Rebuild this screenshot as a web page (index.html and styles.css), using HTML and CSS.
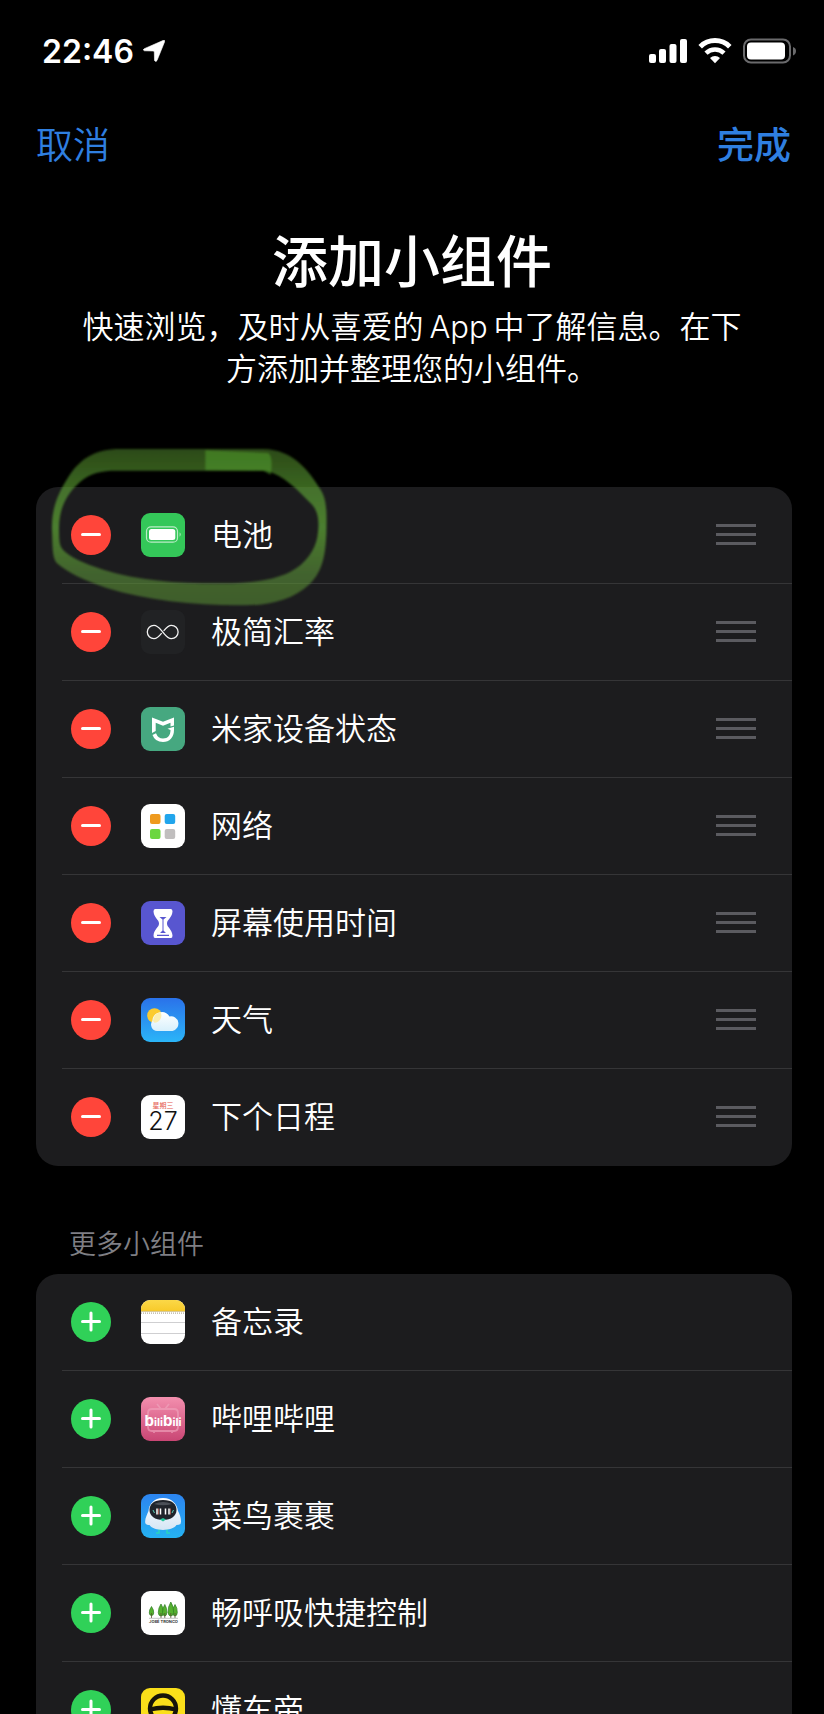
FILE: index.html
```html
<!DOCTYPE html>
<html lang="zh-CN">
<head>
    <meta charset="UTF-8">
    <meta name="viewport" content="width=device-width, initial-scale=1.0">
    <title>添加小组件</title>
    <link rel="stylesheet" href="styles.css">
</head>
<body>
    <div class="screen">
        <div class="status-bar">
            <div class="status-left">
                <span class="time">22:46</span>
                <svg width="22" height="22" viewBox="0 0 22 22"><path d="M20.5 .3 Q22 0 21.7 1.5 L14 20.5 Q13 22.5 11.500 20.5 L11.3 12 Q11.200 11 10.2 11 L1.5 10.800 Q-.8 10 1.3 8.700 Z" fill="#fff" stroke="#fff" stroke-width=".6"/></svg>
            </div>
            <div class="status-right">
                <svg width="38" height="26" viewBox="0 0 38 26" fill="#fff">
                    <rect x="0" y="16" width="7" height="9" rx="2"/>
                    <rect x="10" y="11" width="7" height="14" rx="2"/>
                    <rect x="20.500" y="6" width="7" height="19" rx="2"/>
                    <rect x="31" y="1" width="7" height="24" rx="2"/>
                </svg>
                <svg width="34" height="26" viewBox="0 0 34 26" fill="none" stroke="#fff" stroke-width="5">
                    <path d="M2.200 8.700 A21 21 0 0 1 31.800 8.700"/>
                    <path d="M8 15.200 A13 13 0 0 1 26 15.200" stroke-width="4.500"/>
                    <path d="M17 25.200 L12 20 A7.500 7.500 0 0 1 22 20 Z" fill="#fff" stroke="none"/>
                </svg>
                <svg width="54" height="26" viewBox="0 0 54 26">
                    <rect x="1" y="1.500" width="46" height="23" rx="7" fill="none" stroke="#6a6a6c" stroke-width="2"/>
                    <rect x="4" y="4.500" width="38" height="17" rx="4" fill="#fff"/>
                    <path d="M50 9 Q53 10 53 13 T50 17.500 Z" fill="#6a6a6c"/>
                </svg>
            </div>
        </div>

        <nav class="nav-bar">
            <button type="button" class="nav-btn">取消</button>
            <button type="button" class="nav-btn nav-done">完成</button>
        </nav>

        <header class="intro">
            <h1>添加小组件</h1>
            <p>快速浏览，及时从喜爱的<span class="latin">App</span>中了解信息。在下方添加并整理您的小组件。</p>
        </header>

        <main>
            <section class="card">
                <ul class="widget-list">
                    <li class="row">
                        <button type="button" class="toggle remove" aria-label="移除电池"></button>
                        <svg class="app-icon" viewBox="0 0 44 44">
                            <rect width="44" height="44" fill="#34c759"/>
                            <rect x="5.500" y="13.800" width="31" height="15.400" rx="4.500" fill="none" stroke="#b9ecc6" stroke-width="1.200"/>
                            <rect x="8" y="16" width="26.300" height="11" rx="2.500" fill="#fff"/>
                            <path d="M38.600 19.300 Q40.800 21.500 38.600 23.700 Z" fill="#b9ecc6"/>
                        </svg>
                        <span class="name">电池</span>
                        <button type="button" class="handle" aria-label="移动电池"></button>
                    </li>
                    <li class="row">
                        <button type="button" class="toggle remove" aria-label="移除极简汇率"></button>
                        <svg class="app-icon" viewBox="0 0 44 44">
                            <rect width="44" height="44" fill="#212224"/>
                            <path d="M20.700 23.200 C18.500 26 16.300 28.700 13 28.700 A6.700 6.700 0 0 1 13 15.300 C16.800 15.300 19 18.800 21.700 22 C24.400 25.200 26.600 28.700 30.400 28.700 A6.700 6.700 0 0 0 30.400 15.300 C27 15.300 25 18 22.700 20.800" fill="none" stroke="#f2f2f2" stroke-width="1.300"/>
                        </svg>
                        <span class="name">极简汇率</span>
                        <button type="button" class="handle" aria-label="移动极简汇率"></button>
                    </li>
                    <li class="row">
                        <button type="button" class="toggle remove" aria-label="移除米家设备状态"></button>
                        <svg class="app-icon" viewBox="0 0 44 44">
                            <rect width="44" height="44" fill="#46a880"/>
                            <path d="M11 10.500 L22 14.800 L33 10.500 V18.500 L29.500 19.500 V15.800 L22 18.800 L14.700 15.800 V24 L11 26 Z" fill="#fff"/>
                            <path d="M11.500 28 L15 26.200 Q17 31.500 22 31.500 C27 31.500 29.500 28 29.500 23 L26.500 21.800 L33 19.800 V23 C33 30.500 28.500 35 22 35 Q14 35 11.500 28 Z" fill="#fff"/>
                        </svg>
                        <span class="name">米家设备状态</span>
                        <button type="button" class="handle" aria-label="移动米家设备状态"></button>
                    </li>
                    <li class="row">
                        <button type="button" class="toggle remove" aria-label="移除网络"></button>
                        <svg class="app-icon" viewBox="0 0 44 44">
                            <rect width="44" height="44" fill="#fff"/>
                            <rect x="9" y="10" width="10.500" height="10" rx="2" fill="#ee9a1e"/>
                            <rect x="23.700" y="10" width="10.500" height="10" rx="2" fill="#21a5ec"/>
                            <rect x="9" y="25" width="10.500" height="10" rx="2" fill="#6bd63f"/>
                            <rect x="23.700" y="25" width="10.500" height="10" rx="2" fill="#c0bebe"/>
                        </svg>
                        <span class="name">网络</span>
                        <button type="button" class="handle" aria-label="移动网络"></button>
                    </li>
                    <li class="row">
                        <button type="button" class="toggle remove" aria-label="移除屏幕使用时间"></button>
                        <svg class="app-icon" viewBox="0 0 44 44">
                            <rect width="44" height="44" fill="#5856d0"/>
                            <path d="M14 8 H30 Q31.500 8 31.500 10.500 C31 17 26 18.500 26 22.500 C26 26.500 31 28 31.500 34.500 Q31.500 37 30 37 H14 Q12.500 37 12.500 34.500 C13 28 18 26.500 18 22.500 C18 18.500 13 17 12.500 10.500 Q12.500 8 14 8 Z" fill="#fff"/>
                            <path d="M18.500 16 H25.500 L22.500 18.500 V29.500 L25 32 H19 L21.500 29.500 V18.500 Z" fill="#5856d0"/>
                            <path d="M16 34.400 H28" stroke="#5856d0" stroke-width="1.200"/>
                        </svg>
                        <span class="name">屏幕使用时间</span>
                        <button type="button" class="handle" aria-label="移动屏幕使用时间"></button>
                    </li>
                    <li class="row">
                        <button type="button" class="toggle remove" aria-label="移除天气"></button>
                        <svg class="app-icon" viewBox="0 0 44 44">
                            <linearGradient id="sky" x2="0" y2="1"><stop stop-color="#2a72ea"/><stop offset="1" stop-color="#2bb5f8"/></linearGradient>
                            <linearGradient id="cloud" x2="0" y2="1"><stop stop-color="#fff"/><stop offset="1" stop-color="#d8f0fc"/></linearGradient>
                            <rect width="44" height="44" fill="url(#sky)"/>
                            <circle cx="13.500" cy="17.500" r="7.300" fill="#fbcb30"/>
                            <path d="M16 33 A6.300 6.300 0 0 1 11.300 23 A9.300 9.300 0 0 1 28.500 18.500 A7.300 7.300 0 1 1 31.500 33 Z" fill="url(#cloud)"/>
                            <path d="M13.500 24.800 A7.300 7.300 0 0 0 19.500 14 Q12.500 16 12 23 Z" fill="#fbeeb0"/>
                        </svg>
                        <span class="name">天气</span>
                        <button type="button" class="handle" aria-label="移动天气"></button>
                    </li>
                    <li class="row">
                        <button type="button" class="toggle remove" aria-label="移除下个日程"></button>
                        <svg class="app-icon" viewBox="0 0 44 44">
                            <rect width="44" height="44" fill="#fff"/>
                            <text x="22" y="13" class="cal-week">星期三</text>
                            <text x="22" y="35" class="cal-day">27</text>
                        </svg>
                        <span class="name">下个日程</span>
                        <button type="button" class="handle" aria-label="移动下个日程"></button>
                    </li>
                </ul>

                <!-- marker loop around the battery row -->
                <svg class="marker" viewBox="60 50 840 480">
                    <defs>
                        <linearGradient id="ink" x2="0" y2="1">
                            <stop stop-color="#5c9a30" stop-opacity=".48"/>
                            <stop offset=".25" stop-color="#5ea535" stop-opacity=".62"/>
                            <stop offset=".5" stop-color="#5ea535" stop-opacity=".72"/>
                            <stop offset=".8" stop-color="#5f9a38" stop-opacity=".56"/>
                            <stop offset="1" stop-color="#5f9a38" stop-opacity=".52"/>
                        </linearGradient>
                        <filter id="soft"><feGaussianBlur stdDeviation="3"/></filter>
                    </defs>
                    <g filter="url(#soft)">
                        <path fill="url(#ink)" fill-rule="evenodd" d="M66 300 C64 240 80 195 115 140 C150 85 195 56 270 56 L700 56 C790 58 835 120 870 175 C890 205 891 240 889 310 C886 370 880 420 840 460 C790 508 720 525 640 525 C500 526 350 510 230 473 C160 450 110 425 80 398 C66 380 68 345 66 300 Z
                            M87 300 C86 240 105 195 150 155 C180 128 215 121 260 121 L710 121 C760 135 800 175 845 222 C866 245 869 275 862 320 C856 355 830 400 780 425 C730 450 660 459 580 459 C450 460 330 452 220 418 C160 400 120 380 100 360 C86 345 88 325 87 300 Z"/>
                        <path d="M526 60 L715 68 Q730 80 722 133 L700 121 L526 120 Z" fill="#53a52e" opacity=".5"/>
                    </g>
                </svg>
            </section>

            <h2>更多小组件</h2>

            <section class="card">
                <ul class="widget-list">
                    <li class="row">
                        <button type="button" class="toggle add" aria-label="添加备忘录"></button>
                        <svg class="app-icon" viewBox="0 0 44 44">
                            <linearGradient id="pad" x2="0" y2="1"><stop stop-color="#fbd848"/><stop offset="1" stop-color="#f8ca2a"/></linearGradient>
                            <rect width="44" height="44" fill="#fff"/>
                            <rect width="44" height="11" fill="url(#pad)"/>
                            <path d="M0 11.400 H44" stroke="#c9b56c" stroke-width=".8"/>
                            <path d="M0 13.200 H44" stroke="#b4ae9c" stroke-width="1.200" stroke-dasharray="1 1"/>
                            <path d="M0 22.500 H44 M0 33.500 H44" stroke="#cfcfd1"/>
                        </svg>
                        <span class="name">备忘录</span>
                    </li>
                    <li class="row">
                        <button type="button" class="toggle add" aria-label="添加哔哩哔哩"></button>
                        <svg class="app-icon" viewBox="0 0 44 44">
                            <linearGradient id="pink" x2="0" y2="1"><stop stop-color="#f38fae"/><stop offset="1" stop-color="#c94674"/></linearGradient>
                            <rect width="44" height="44" fill="url(#pink)"/>
                            <path d="M16 7 L20 12 M28 7 L24 12 M11 12 H33 Q37 12 37 16 V30 Q37 34 33 34 H11 Q7 34 7 30 V16 Q7 12 11 12 Z M13 34 V36 M31 34 V36" fill="none" stroke="#f0a3bc" stroke-width="1.800" opacity=".65"/>
                            <text x="22" y="29" class="bili"><tspan class="bili-b">b</tspan>ili<tspan class="bili-b">b</tspan>ili</text>
                        </svg>
                        <span class="name">哔哩哔哩</span>
                    </li>
                    <li class="row">
                        <button type="button" class="toggle add" aria-label="添加菜鸟裹裹"></button>
                        <svg class="app-icon" viewBox="0 0 44 44">
                            <linearGradient id="blue" x2="0" y2="1"><stop stop-color="#2c84f0"/><stop offset="1" stop-color="#25b2f2"/></linearGradient>
                            <linearGradient id="body" x2="0" y2="1"><stop stop-color="#fff"/><stop offset="1" stop-color="#d5e6f5"/></linearGradient>
                            <rect width="44" height="44" fill="url(#blue)"/>
                            <path d="M18 34 V39 H15 M26 34 V39 H29" fill="none" stroke="#2bd3bd" stroke-width="1.500"/>
                            <path d="M22 4 C31 4 36 10 37 17 C39 21 41 26 39.500 30 Q38 31 35.500 31 C31 37.500 13 37.500 8.500 31 Q5 31 4.300 29 C3.500 25 6 21 7.500 17 C8 10 13 4 22 4 Z" fill="url(#body)"/>
                            <path d="M22 6 C31 6 35.500 10 35.500 16 C35.500 22 30 26 22 26 C14 26 8.500 22 8.500 16 C8.500 10 13 6 22 6 Z" fill="#20242b"/>
                            <path d="M13 10 Q22 6 31 10 Q22 12.500 13 10 Z" fill="#4b5058"/>
                            <path d="M16 14.500 V20.500 M19.500 14.500 V20.500 M24.500 14.500 V20.500 M28 14.500 V20.500" stroke="#fff" stroke-width="1.500"/>
                            <path d="M17.500 14.500 V20.500 M29.500 14.500 V20.500" stroke="#c46a5c" stroke-width=".8"/>
                            <path d="M12 16 L13.500 19 M32.500 16 L31 19" stroke="#5ad0b8"/>
                            <path d="M19 25.500 L22 24 L25 25.500 L22 27.500 Z" fill="#25c59c"/>
                        </svg>
                        <span class="name">菜鸟裹裹</span>
                    </li>
                    <li class="row">
                        <button type="button" class="toggle add" aria-label="添加畅呼吸快捷控制"></button>
                        <svg class="app-icon" viewBox="0 0 44 44">
                            <rect width="44" height="44" fill="#fff"/>
                            <g fill="#55b02f" stroke="#2c7d22" stroke-width=".7">
                                <path d="M10.500 15.500 Q13 19 12.700 22 Q12.500 24.500 10.500 24.500 T8.300 22 Q8 19 10.500 15.500 Z"/>
                                <path d="M20 13 Q22.800 17 22.600 21.500 Q22.500 25 20 25 T17.300 21.500 Q17.200 17 20 13 Z"/>
                                <path d="M23.800 13.500 Q26 17 25.900 21.500 Q25.500 25 23.800 25 T21.500 21.500 Q21.500 17 23.800 13.500 Z"/>
                                <path d="M34 13.500 Q36.500 17 36.300 21.500 Q36 25 34 25 T31.700 21.500 Q31.500 17 34 13.500 Z"/>
                                <path d="M29.800 11 Q33 16 32.600 21.500 Q32 25 29.800 25 T27 21.500 Q26.800 16 29.800 11 Z"/>
                            </g>
                            <path d="M10.500 22 V27 M20 22 V27 M23.800 22 V27 M29.800 22 V27 M34 22 V27" stroke="#5b5230" stroke-width=".8"/>
                            <path d="M8 27.300 H37" stroke="#aaa" stroke-width=".7"/>
                            <text x="22.500" y="32" class="trees">JOSÉ TRONCO</text>
                        </svg>
                        <span class="name">畅呼吸快捷控制</span>
                    </li>
                    <li class="row">
                        <button type="button" class="toggle add" aria-label="添加懂车帝"></button>
                        <svg class="app-icon" viewBox="0 0 44 44">
                            <rect width="44" height="44" fill="#fadf1a"/>
                            <circle cx="22" cy="20.500" r="13" fill="none" stroke="#17150a" stroke-width="4.400"/>
                            <path d="M9 21.500 Q22 18 35 21.500" fill="none" stroke="#17150a" stroke-width="4.400"/>
                            <path d="M12 38 H32" stroke="#17150a" stroke-width="4"/>
                        </svg>
                        <span class="name">懂车帝</span>
                    </li>
                </ul>
            </section>
        </main>
    </div>
</body>
</html>
```

FILE: styles.css
```css
/* Base Styling */
* {
    box-sizing: border-box;
}

body {
    margin: 0;
    background-color: #000;
    color: #fff;
    font-family: Inter, "Noto Sans CJK SC", sans-serif;
}

button {
    padding: 0;
    border: none;
    background: none;
    font-family: inherit;
    cursor: pointer;
}

.screen {
    height: 100vh;
    overflow: hidden;
}

/* Status bar */
.status-bar {
    display: flex;
    justify-content: space-between;
    align-items: center;
    height: 102px;
    padding: 0 27px 0 42px;
}

.status-left {
    display: flex;
    align-items: center;
    gap: 9px;
}

.status-right {
    display: flex;
    align-items: center;
    gap: 11px;
}

.time {
    font-size: 32px;
    font-weight: 600;
}

/* Navigation */
.nav-bar {
    display: flex;
    justify-content: space-between;
    align-items: center;
    height: 88px;
    padding: 0 33px 0 36px;
}

.nav-btn {
    color: #2f7fe0;
    font-size: 37px;
    font-weight: 350;
    line-height: 48px;
}

.nav-done {
    font-weight: 500;
}

.intro {
    padding: 36px 72px 0;
    text-align: center;
}

.intro h1 {
    margin: 0;
    font-size: 56px;
    font-weight: 500;
    line-height: 72px;
}

.intro p {
    margin: 8px 0 0;
    font-size: 31px;
    font-weight: 350;
    line-height: 42px;
}

.latin {
    margin: 0 6px;
}

/* Widget lists */
main {
    padding: 97px 32px 0 36px;
}

h2 {
    margin: 62px 0 12px 33px;
    color: #7f7f84;
    font-size: 27px;
    font-weight: 350;
    line-height: 34px;
}

.card {
    position: relative;
    border-radius: 22px;
    background-color: #1c1c1e;
}

.widget-list {
    margin: 0;
    padding: 0 0 0 26px;
    list-style: none;
}

.row {
    display: flex;
    align-items: center;
    height: 97px;
    padding: 0 36px 0 9px;
    border-bottom: 1px solid #353537;
}

.row:last-child {
    border-bottom-color: transparent;
}

.toggle {
    position: relative;
    width: 40px;
    height: 40px;
    border-radius: 50%;
}

.toggle::before,
.toggle.add::after {
    content: "";
    position: absolute;
    top: 18px;
    left: 10px;
    width: 20px;
    height: 3px;
    border-radius: 2px;
    background-color: #fff;
}

.toggle.add::after {
    transform: rotate(90deg);
}

.remove {
    background-color: #ff453a;
}

.add {
    background-color: #30d158;
}

.app-icon {
    width: 44px;
    height: 44px;
    margin: 0 26px 0 30px;
    border-radius: 9px;
}

.name {
    flex: 1;
    font-size: 31px;
    font-weight: 350;
    line-height: 44px;
}

.handle {
    width: 40px;
    height: 22px;
    background: linear-gradient(#5b5b60 3px, transparent 3px 9px, #5b5b60 9px 12px, transparent 12px 18px, #5b5b60 18px 21px, transparent 21px);
}

/* Text inside app icons */
.cal-week {
    fill: #e4574c;
    font-size: 7px;
    text-anchor: middle;
}

.cal-day {
    fill: #111;
    font-size: 25px;
    font-weight: 300;
    text-anchor: middle;
}

.bili {
    fill: #fff;
    font-size: 11px;
    font-weight: 700;
    text-anchor: middle;
}

.bili-b {
    font-size: 15px;
}

.trees {
    fill: #333;
    font-size: 4px;
    font-weight: 700;
    text-anchor: middle;
}

.marker {
    position: absolute;
    top: -40px;
    left: 14px;
    width: 280px;
    height: 160px;
    pointer-events: none;
}
```
